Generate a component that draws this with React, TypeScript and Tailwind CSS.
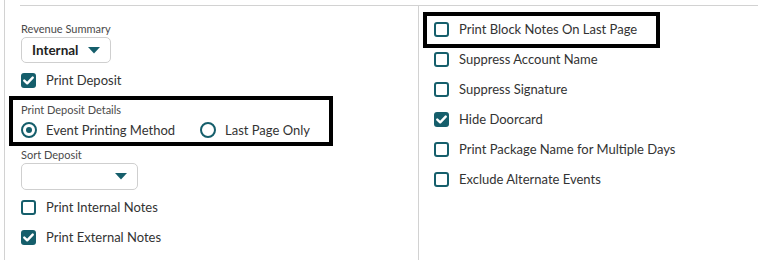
import React from 'react'

const TEAL = '#155e6b'

function Check({ checked }: { checked?: boolean }) {
  if (checked) {
    return (
      <span className="flex h-[15px] w-[15px] shrink-0 items-center justify-center rounded-[3px] bg-[#155e6b]">
        <svg width="11" height="9" viewBox="0 0 11 9">
          <path d="M1.3 4.6 L4.2 7.3 L9.7 1.6" fill="none" stroke="#fff" strokeWidth="2.4" strokeLinecap="round" strokeLinejoin="round" />
        </svg>
      </span>
    )
  }
  return <span className="block h-[15px] w-[15px] shrink-0 rounded-[3px] border-2 border-[#155e6b] bg-white" />
}

function Radio({ checked }: { checked?: boolean }) {
  return (
    <span className="flex h-[16px] w-[16px] shrink-0 items-center justify-center rounded-full border-[2.5px] border-[#155e6b]">
      {checked && <span className="block h-[6px] w-[6px] rounded-full bg-[#155e6b]" />}
    </span>
  )
}

function Caret() {
  return (
    <svg width="12" height="7" viewBox="0 0 12 7">
      <path d="M0 0 H12 L6 6.5 Z" fill={TEAL} />
    </svg>
  )
}

function CheckRow({ label, checked, className = '' }: { label: string; checked?: boolean; className?: string }) {
  return (
    <div className={`flex h-[15px] items-center gap-[10px] ${className}`}>
      <Check checked={checked} />
      <span className="whitespace-nowrap text-[13px] leading-[15px] text-[#333]">{label}</span>
    </div>
  )
}

export default function App() {
  return (
    <div className="h-[260px] w-[759px] overflow-hidden bg-white font-['Lato','Liberation_Sans',sans-serif]">
      <div className="ml-[4px] flex h-full flex-col border-l border-[#d2d2d2]">
        <div className="mr-[1px] ml-[15px] mt-[5px] border-t border-[#d2d2d2]" />

        <div className="flex flex-1">
          {/* left column */}
          <div className="flex w-[413px] flex-col">
            <div className="pl-[16px]">
              <div className="mt-[15px] text-[11px] leading-[15px] text-[#4a4a4a]">Revenue Summary</div>
              <div className="mt-[1px] flex h-[26px] w-[90px] items-center justify-between rounded-[5px] border border-[#cfcfcf] pl-[10px] pr-[10px]">
                <span className="text-[13.5px] font-bold text-[#222]">Internal</span>
                <Caret />
              </div>
              <CheckRow label="Print Deposit" checked className="mt-[10px]" />
            </div>

            <div className="ml-[4px] mt-[8px] h-[50px] w-[324px] border-4 border-black pl-[8px] pt-[2px]">
              <div className="text-[11px] leading-[15px] text-[#4a4a4a]">Print Deposit Details</div>
              <div className="mt-[5px] flex items-center">
                <div className="flex w-[179px] items-center gap-[9px]">
                  <Radio checked />
                  <span className="whitespace-nowrap text-[13px] leading-[15px] text-[#333]">Event Printing Method</span>
                </div>
                <div className="flex items-center gap-[9px]">
                  <Radio />
                  <span className="whitespace-nowrap text-[13px] leading-[15px] text-[#333]">Last Page Only</span>
                </div>
              </div>
            </div>

            <div className="pl-[16px]">
              <div className="mt-[1px] text-[11px] leading-[15px] text-[#4a4a4a]">Sort Deposit</div>
              <div className="mt-[1px] flex h-[27px] w-[117px] items-center justify-end rounded-[5px] border border-[#cfcfcf] pr-[10px]">
                <Caret />
              </div>
              <CheckRow label="Print Internal Notes" className="mt-[10px]" />
              <CheckRow label="Print External Notes" checked className="mt-[15px]" />
            </div>
          </div>

          {/* right column */}
          <div className="flex flex-1 flex-col border-l border-[#d2d2d2]">
            <div className="ml-[4px] mt-[6px] h-[36px] w-[237px] border-4 border-black pl-[7px] pt-[6px]">
              <CheckRow label="Print Block Notes On Last Page" />
            </div>
            <div className="ml-[15px] mt-[4px] flex flex-col gap-[15px]">
              <CheckRow label="Suppress Account Name" />
              <CheckRow label="Suppress Signature" />
              <CheckRow label="Hide Doorcard" checked />
              <CheckRow label="Print Package Name for Multiple Days" />
              <CheckRow label="Exclude Alternate Events" />
            </div>
          </div>
        </div>
      </div>
    </div>
  )
}
